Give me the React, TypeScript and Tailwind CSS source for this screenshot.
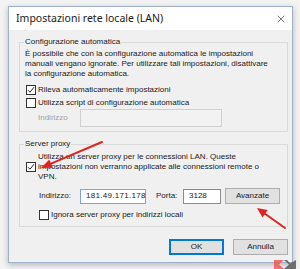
import { X } from "lucide-react";

const font = { fontFamily: '"Noto Sans", "Liberation Sans", sans-serif' };
const bodyFont = { fontFamily: '"Liberation Sans", Arial, sans-serif' };

function Check({ checked }: { checked?: boolean }) {
  return (
    <span className="w-[10px] h-[10px] shrink-0 border border-[#333] bg-white flex items-center justify-center">
      {checked && (
        <svg width="8" height="8" viewBox="0 0 8 8">
          <path d="M1 4.2 L3 6.2 L7 1.2" fill="none" stroke="#222" strokeWidth="1" />
        </svg>
      )}
    </span>
  );
}

function Overlay() {
  return (
    <svg className="absolute inset-0 pointer-events-none" width="300" height="269" viewBox="0 0 300 269">
      {/* arrow to the proxy checkbox */}
      <line x1="102" y1="142" x2="51" y2="163.7" stroke="#e0231f" strokeWidth="2" strokeLinecap="round" />
      <polygon points="41,168 52.9,167.8 49.3,159.6" fill="#e0231f" />
      {/* arrow to Avanzate */}
      <line x1="285" y1="228" x2="265" y2="213.8" stroke="#e0231f" strokeWidth="2" strokeLinecap="round" />
      <polygon points="257,208 267.7,210.1 262.5,217.5" fill="#e0231f" />
      {/* watermark */}
      <g opacity="0.85">
        <polygon points="274,260 284,260 279,264.5 284,269 274,269" fill="#f05a5a" />
        <polygon points="284,260 287,260 290,263.5 296,260 296,269 284,269 289,264.5" fill="#5a5a5a" />
      </g>
    </svg>
  );
}

export default function App() {
  return (
    <div className="relative w-[300px] h-[269px] overflow-hidden bg-[#f3f3f3] pt-[6px] pl-[8px] text-[#1a1a1a]" style={font}>
      <div className="w-[285px] h-[257px] border border-[#9fb2cc] bg-[#f0f0f0] flex flex-col shadow-[0_2px_6px_rgba(0,0,0,0.25)]">
        {/* Title bar */}
        <div className="h-[23px] bg-white flex items-center justify-between pl-[7px] pr-[5px]">
          <span className="text-[10.5px] leading-none">Impostazioni rete locale (LAN)</span>
          <X size={12} strokeWidth={1.2} className="text-[#222]" />
        </div>

        <div className="flex-1 pl-[10px] pr-[4px] pt-[6px] text-[8px]" style={bodyFont}>
          {/* Configurazione automatica */}
          <fieldset className="border border-[#d9d9d9] pl-[4px] pr-[4px] pb-[4px]">
            <legend className="px-[1px] leading-[12px]">Configurazione automatica</legend>
            <div className="mt-[1px] pl-[1px] leading-[10px] whitespace-nowrap">
              <div>È possibile che con la configurazione automatica le impostazioni</div>
              <div>manuali vengano ignorate. Per utilizzare tali impostazioni, disattivare</div>
              <div>la configurazione automatica.</div>
            </div>
            <div className="mt-[4px] h-[13px] pl-[2px] flex items-center gap-[2px]">
              <Check checked />
              <span>Rileva automaticamente impostazioni</span>
            </div>
            <div className="h-[13px] pl-[2px] flex items-center gap-[2px]">
              <Check />
              <span>Utilizza script di configurazione automatica</span>
            </div>
            <div className="h-[18px] flex items-center">
              <span className="pl-[14px] w-[56px] text-[#a2a2a2]">Indirizzo</span>
              <div className="w-[142px] h-[18px] border border-[#d0d0d0] bg-[#f2f2f2]" />
            </div>
          </fieldset>

          {/* Server proxy */}
          <fieldset className="mt-[6px] border border-[#d9d9d9] pl-[4px] pr-[4px] pb-[5px]">
            <legend className="px-[1px] leading-[12px]">Server proxy</legend>
            <div className="mt-[2px] pl-[2px] flex gap-[2px]">
              <span className="mt-[10px]">
                <Check checked />
              </span>
              <div className="leading-[10px] whitespace-nowrap">
                <div>Utilizza un server proxy per le connessioni LAN. Queste</div>
                <div>impostazioni non verranno applicate alle connessioni remote o</div>
                <div>VPN.</div>
              </div>
            </div>
            <div className="mt-[6px] flex items-center h-[16px]">
              <span className="pl-[15px] w-[56px]">Indirizzo:</span>
              <div className="w-[66px] h-[15px] border border-[#7aa7d6] bg-white flex items-center pl-[5px] tracking-[0.3px]">
                181.49.171.178
              </div>
              <span className="ml-[10px] w-[27px]">Porta:</span>
              <div className="w-[38px] h-[15px] border border-[#8a8a8a] bg-white flex items-center pl-[5px]">3128</div>
              <button className="ml-[4px] w-[55px] h-[16px] border border-[#adadad] bg-[#e1e1e1] flex items-center justify-center">
                Avanzate
              </button>
            </div>
            <div className="mt-[5px] h-[12px] pl-[15px] flex items-center gap-[2px]">
              <Check />
              <span>Ignora server proxy per indirizzi locali</span>
            </div>
          </fieldset>

          {/* Buttons */}
          <div className="mt-[12px] flex justify-end gap-[9px]">
            <button className="w-[55px] h-[16px] border-2 border-[#0078d7] bg-[#e1e1e1] flex items-center justify-center">
              OK
            </button>
            <button className="w-[55px] h-[16px] border border-[#adadad] bg-[#e1e1e1] flex items-center justify-center">
              Annulla
            </button>
          </div>
        </div>
      </div>
      <Overlay />
    </div>
  );
}
